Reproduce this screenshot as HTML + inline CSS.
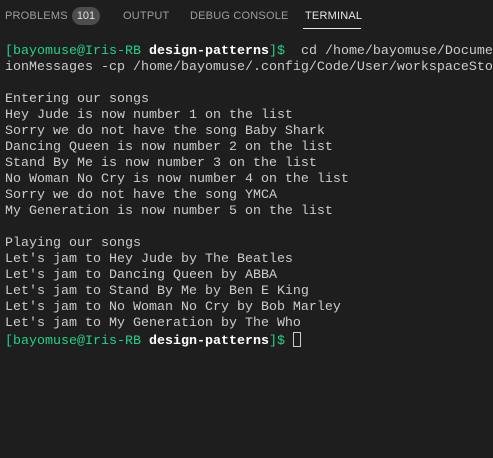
<!DOCTYPE html>
<html><head><style>
html,body{margin:0;padding:0;background:#1e1e1e;width:493px;height:458px;overflow:hidden;position:relative}
.tabs{position:absolute;top:0;left:0;width:493px;height:32px;font-family:"Liberation Sans",sans-serif;font-size:11px;color:#9d9d9d}
.tabs span{position:absolute;top:10px;letter-spacing:0.2px}
.badge{position:absolute;left:72px;top:7px;width:28px;height:18px;border-radius:9px;background:#4d4d4d;color:#e0e0e0;text-align:center;line-height:18px;font-size:11px}
.ul{position:absolute;left:303px;top:28px;width:58px;height:1px;background:#e7e7e7}
pre{position:absolute;left:5px;top:44px;width:488px;overflow:hidden;margin:0;font-family:"Liberation Mono",monospace;font-size:13.33px;line-height:16px;color:#cccccc}
.g{color:#23d18b}.b{color:#fff;font-weight:bold}
.cur{display:inline-block;width:8px;height:15px;border:1px solid #ccc;vertical-align:-3px;box-sizing:border-box}
</style></head><body>
<div class="tabs">
<span style="left:5px">PROBLEMS</span>
<div class="badge">101</div>
<span style="left:123px">OUTPUT</span>
<span style="left:190px">DEBUG CONSOLE</span>
<span style="left:305px;color:#e7e7e7">TERMINAL</span>
<div class="ul"></div>
</div>
<pre><span class="g">[bayomuse@Iris-RB </span><span class="b">design-patterns</span><span class="g">]$</span>  cd /home/bayomuse/Documents
ionMessages -cp /home/bayomuse/.config/Code/User/workspaceStorage

Entering our songs
Hey Jude is now number 1 on the list
Sorry we do not have the song Baby Shark
Dancing Queen is now number 2 on the list
Stand By Me is now number 3 on the list
No Woman No Cry is now number 4 on the list
Sorry we do not have the song YMCA
My Generation is now number 5 on the list

Playing our songs
Let's jam to Hey Jude by The Beatles
Let's jam to Dancing Queen by ABBA
Let's jam to Stand By Me by Ben E King
Let's jam to No Woman No Cry by Bob Marley
Let's jam to My Generation by The Who
<span class="g">[bayomuse@Iris-RB </span><span class="b">design-patterns</span><span class="g">]$</span> <span class="cur"></span></pre>
</body></html>
